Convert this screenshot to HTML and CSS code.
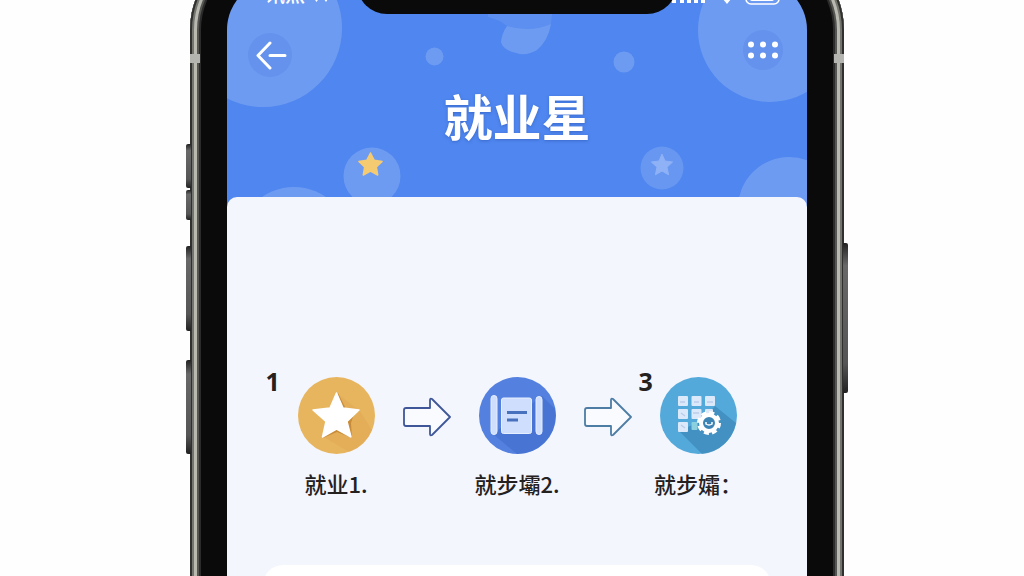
FILE: index.html
```html
<!DOCTYPE html>
<html lang="zh-CN">
<head>
<meta charset="utf-8">
<meta name="viewport" content="width=device-width, initial-scale=1">
<title>就业星</title>
<link rel="stylesheet" href="styles.css">
</head>
<body>
<div class="stage">
  <div class="phone">
    <span class="key key-mute"></span>
    <span class="key key-mute-low"></span>
    <span class="key key-up"></span>
    <span class="key key-down"></span>
    <span class="key key-power"></span>
    <span class="band band-left"></span>
    <span class="band band-right"></span>
    <main class="screen">
      <div class="notch"></div>
      <header class="hero">
        <svg class="hero-art" viewBox="227 -20 580 225" preserveAspectRatio="xMidYMax slice" aria-hidden="true">
          <g fill="#fff" fill-opacity=".18">
            <circle cx="263" cy="28" r="79"/>
            <circle cx="770" cy="30" r="72"/>
            <circle cx="434.500" cy="56.500" r="9"/>
            <circle cx="624" cy="62" r="10.500"/>
            <circle cx="372" cy="176" r="28.500"/>
            <circle cx="294" cy="243" r="56"/>
            <circle cx="662" cy="168" r="21.500" fill-opacity=".14"/>
            <circle cx="789" cy="208" r="51"/>
            <path d="M501 42Q502 33 507 26Q516 29 526 29Q540 29 551 24Q548 41 537 50Q529 55 520 54Q503 51 501 42Z"/>
            <path d="M488 14H552L551 24Q540 29 526 29Q516 29 507 26Q500 20 488 17Z" fill-opacity=".08"/>
          </g>
          <path d="M370.500 153l3.600 7.200 8 1.200-5.800 5.600 1.400 8-7.200-3.800-7.200 3.800 1.400-8-5.800-5.600 8-1.200z" fill="#f5cb72" stroke="#f5cb72" stroke-width="1.500" stroke-linejoin="round"/>
          <path d="M662 154l3 7 7.600 1-5.600 5.200 1.600 7.600-6.600-3.800-6.600 3.800 1.600-7.600-5.600-5.200 7.600-1z" fill="#8fb1f6" stroke="#8fb1f6" stroke-linejoin="round"/>
        </svg>
        <div class="status">
          <span class="carrier">讯烈
            <svg width="17" height="12" viewBox="0 0 17 12" aria-hidden="true"><path d="M0 4h7l-3.500 5zM9 3h8l-4 6z" fill="#fff"/></svg>
          </span>
          <svg width="110" height="20" viewBox="0 0 110 20" fill="#fff" aria-hidden="true">
            <path d="M0 14h5v4H1zM9 12h4v6H9zM16 10h4v8h-4zM23 8h4v10h-4zM30 6h4v12h-4zM47 8q9-7 18 0l-9 11z"/>
            <rect x="75" y="2" width="33" height="17" rx="5" fill="none" stroke="#fff" stroke-width="1.500"/>
            <rect x="79" y="5" width="24" height="11" rx="2"/>
          </svg>
        </div>
        <nav class="bar">
          <button class="round" type="button" aria-label="返回">
            <svg width="34" height="30" viewBox="0 0 34 30" fill="none" stroke="#fff" stroke-width="3" stroke-linecap="round" stroke-linejoin="round" aria-hidden="true"><path d="M17 3L5 15.500L17 28M17 15.500H32"/></svg>
          </button>
          <button class="round round-small" type="button" aria-label="更多">
            <svg width="32" height="20" viewBox="0 0 32 20" fill="#fff" aria-hidden="true"><circle cx="4" cy="4.500" r="3"/><circle cx="16" cy="4.500" r="3"/><circle cx="28" cy="4.500" r="3"/><circle cx="4" cy="15.500" r="3"/><circle cx="16" cy="15.500" r="3"/><circle cx="28" cy="15.500" r="3"/></svg>
          </button>
        </nav>
        <h1 class="title">就业星</h1>
      </header>
      <section class="panel">
        <div class="steps">
          <div class="step">
            <span class="number">1</span>
            <svg class="badge" viewBox="0 0 77 77" aria-hidden="true">
              <circle cx="38.500" cy="38.500" r="38.500" fill="#e8b55f"/>
              <path d="M39 16l23 18L74 53A38.500 38.500 0 0 1 51 75L24 59z" fill="#dfa450" fill-opacity=".4"/>
              <path d="M40 16l8 16 9 2-4 12 1 15-15-6-14 6z" fill="#c98c38"/>
              <path d="M38.500 16l6.500 15 16 2-12 11.500 4 15.500-14.500-8-14 8 3.500-15.500L15 33l17-2z" fill="#fff" stroke="#fff" stroke-width="1.500" stroke-linejoin="round"/>
            </svg>
            <span class="label">就业1.</span>
          </div>
          <svg class="arrow" viewBox="0 0 48 40" aria-hidden="true"><path d="M3 11h24V3q0-2 2-1l18 18-18 18q-2 1-2-1v-8H3q-2 0-2-2V13q0-2 2-2z" fill="#f9fbff" stroke="#3f5799" stroke-width="1.800" stroke-linejoin="round"/></svg>
          <div class="step">
            <svg class="badge" viewBox="0 0 77 77" aria-hidden="true">
              <circle cx="38.500" cy="38.500" r="38.500" fill="#5480e0"/>
              <path d="M63 19l13 13A38.500 38.500 0 0 1 38 77L14 57z" fill="#416cc9" fill-opacity=".6"/>
              <g fill="#cfdefd" stroke="#e6efff">
                <rect x="12" y="18.500" width="6" height="39" rx="3"/>
                <rect x="22.500" y="21" width="30" height="35.500" rx="2"/>
                <rect x="57" y="19.500" width="6" height="38" rx="3"/>
              </g>
              <path d="M28 35.500h20M28 43h11" stroke="#4871bd" stroke-width="3"/>
            </svg>
            <span class="label">就步壩2.</span>
          </div>
          <svg class="arrow" viewBox="0 0 48 40" aria-hidden="true"><path d="M3 11h24V3q0-2 2-1l18 18-18 18q-2 1-2-1v-8H3q-2 0-2-2V13q0-2 2-2z" fill="#f9fbff" stroke="#4d7ca5" stroke-width="1.800" stroke-linejoin="round"/></svg>
          <div class="step">
            <span class="number number-near">3</span>
            <svg class="badge" viewBox="0 0 77 77" aria-hidden="true">
              <circle cx="38.500" cy="38.500" r="38.500" fill="#54a9db"/>
              <path d="M55 29l21 17A38.500 38.500 0 0 1 42 77L19 54l22-10z" fill="#3c88b8" fill-opacity=".7"/>
              <g fill="#dce9fa">
                <rect x="18" y="19" width="10" height="10" rx="1"/><rect x="31.500" y="19" width="10" height="10" rx="1"/><rect x="45" y="19" width="10" height="10" rx="1"/>
                <rect x="18" y="32" width="10" height="10" rx="1"/><rect x="31.500" y="32" width="10" height="10" rx="1"/><rect x="45" y="32" width="8" height="8" rx="1"/>
                <rect x="18" y="45" width="10" height="10" rx="1"/><rect x="31.500" y="45" width="6" height="8" rx="1" fill="#8bd0df"/>
              </g>
              <g stroke="#fff" fill="none">
                <circle cx="49" cy="46" r="10" stroke-width="4" stroke-dasharray="4.800 3.054"/>
                <circle cx="49" cy="46" r="8" fill="#3c84b4" stroke-width="4"/>
                <path d="M46 45v2q3 2 6 0v-2" stroke-width="1.500"/>
              </g>
              <path d="M20 25h5m9 0h5m8 0h6M21 36l4 3m8-3h6m-18 12 4 3" stroke="#bccdec" stroke-width="1.500"/>
            </svg>
            <span class="label">就步孀：</span>
          </div>
        </div>
        <div class="card"></div>
      </section>
    </main>
  </div>
</div>
</body>
</html>
```
FILE: styles.css
```css
* {
  box-sizing: border-box;
}

body {
  margin: 0;
  background: #fefefe;
  font-family: "Noto Sans", "Noto Sans CJK SC", sans-serif;
  color: #25211f;
}

.stage {
  display: flex;
  justify-content: center;
  height: 100vh;
  padding-left: 10px;
  overflow: hidden;
}

.phone {
  position: relative;
  display: flex;
  width: 100%;
  max-width: 654px;
  min-height: calc(100vh + 180px);
  margin-top: -57px;
  padding: 37px;
  align-self: flex-start;
  border-radius: 87px;
  background: #0a0a0b;
  box-shadow:
    inset 0 0 0 2px #30302f,
    inset 0 0 0 4px #74746f,
    inset 0 0 0 7px #b9b9b2,
    inset 0 0 0 9px #555552,
    inset 0 0 0 11px #2b2b2b;
}

.key {
  position: absolute;
  left: -4px;
  width: 5px;
  border-radius: 2px 0 0 2px;
  background: linear-gradient(#222, #686868 15%, #555 80%, #222);
}

.key-mute {
  top: 201px;
  height: 44px;
}

.key-mute-low {
  top: 247px;
  height: 30px;
}

.key-up {
  top: 303px;
  height: 85px;
}

.key-down {
  top: 417px;
  height: 94px;
}

.key-power {
  top: 300px;
  right: -4px;
  left: auto;
  height: 150px;
  border-radius: 0 2px 2px 0;
}

.band {
  position: absolute;
  top: 111px;
  width: 10px;
  height: 9px;
  background: #b4b4b0;
}

.band-left {
  left: 0;
}

.band-right {
  right: 0;
}

.screen {
  position: relative;
  display: flex;
  flex: 1;
  flex-direction: column;
  overflow: hidden;
  border-radius: 50px;
  background: #4f86ef;
}

.notch {
  position: absolute;
  z-index: 1;
  top: 0;
  left: 50%;
  width: 320px;
  height: 34px;
  margin-left: -160px;
  border-radius: 0 0 30px 30px;
  background: #0a0a0b;
}

.hero {
  position: relative;
  padding-bottom: 52px;
}

.hero-art {
  position: absolute;
  top: 0;
  left: 0;
  width: 100%;
  height: 225px;
}

.status {
  position: relative;
  display: flex;
  justify-content: space-between;
  align-items: flex-end;
  height: 25px;
  padding: 0 26px 0 38px;
}

.carrier {
  display: flex;
  gap: 8px;
  align-items: flex-end;
  color: #fff;
  font-size: 20px;
  font-weight: 500;
  line-height: 20px;
}

.bar {
  position: relative;
  display: flex;
  justify-content: space-between;
  align-items: flex-start;
  padding: 28px 24px 0 21px;
}

.round {
  display: grid;
  place-items: center;
  width: 44px;
  height: 44px;
  padding: 0;
  border: 0;
  border-radius: 50%;
  background: rgba(70, 120, 220, 0.25);
}

.round-small {
  width: 40px;
  height: 40px;
  margin-top: -3px;
}

.title {
  position: relative;
  margin: 8px 0 0;
  color: #fff;
  font-family: "Noto Sans CJK SC", sans-serif;
  font-size: 49px;
  font-weight: 700;
  line-height: 60px;
  text-align: center;
  text-shadow: 0 1px 3px rgba(40, 80, 170, 0.5);
}

.panel {
  position: relative;
  display: flex;
  flex: 1;
  flex-direction: column;
  padding: 180px 36px 0;
  border-radius: 10px 10px 0 0;
  background: #f3f6fd;
}

.steps {
  display: flex;
  justify-content: center;
  gap: 28px;
}

.step {
  position: relative;
  display: flex;
  flex-direction: column;
  align-items: center;
  gap: 14px;
  width: 77px;
}

.badge {
  width: 77px;
  height: 77px;
}

.number {
  position: absolute;
  top: -12px;
  left: -32px;
  font-family: "Noto Sans", sans-serif;
  font-size: 25px;
  font-weight: 700;
  line-height: 32px;
}

.number-near {
  left: -21px;
}

.label {
  font-family: "Noto Sans CJK SC", sans-serif;
  font-size: 22px;
  font-weight: 500;
  line-height: 30px;
  white-space: nowrap;
}

.arrow {
  flex: none;
  width: 48px;
  height: 40px;
  margin-top: 20px;
}

.card {
  flex: 1;
  margin-top: 67px;
  border-radius: 20px 20px 0 0;
  background: #fff;
}
```
